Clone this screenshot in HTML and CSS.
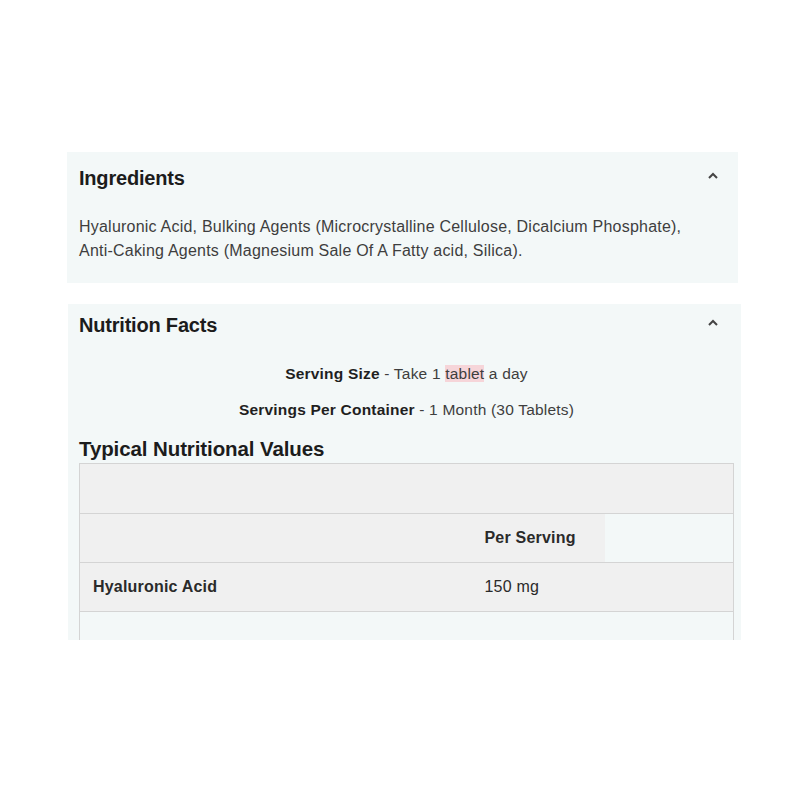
FILE: index.html
```html
<!DOCTYPE html>
<html>
<head>
<meta charset="utf-8">
<link rel="stylesheet" href="styles.css">
</head>
<body>
<div class="page">
  <section class="panel panel-ingredients">
    <div class="panel-head">
      <h2>Ingredients</h2>
      <svg class="chev" width="12" height="8" viewBox="0 0 12 8"><path d="M2 6 L6 2 L10 6" fill="none" stroke="#444" stroke-width="2"/></svg>
    </div>
    <p class="ing-text">Hyaluronic Acid, Bulking Agents (Microcrystalline Cellulose, Dicalcium Phosphate), Anti-Caking Agents (Magnesium Sale Of A Fatty acid, Silica).</p>
  </section>
  <section class="panel panel-nutrition">
    <div class="panel-head">
      <h2>Nutrition Facts</h2>
      <svg class="chev" width="12" height="8" viewBox="0 0 12 8"><path d="M2 6 L6 2 L10 6" fill="none" stroke="#444" stroke-width="2"/></svg>
    </div>
    <p class="serving"><b>Serving Size</b> - Take 1 <span class="hl">tablet</span> a day</p>
    <p class="serving"><b>Servings Per Container</b> - 1 Month (30 Tablets)</p>
    <h3>Typical Nutritional Values</h3>
    <table class="nt">
      <tr class="r-empty"><td colspan="3"></td></tr>
      <tr class="r-head"><td class="c1"></td><td class="c2 grey">Per Serving</td><td class="c3"></td></tr>
      <tr class="r-val"><td class="c1">Hyaluronic Acid</td><td class="c2" colspan="2">150 mg</td></tr>
      <tr class="r-last"><td colspan="3"></td></tr>
    </table>
  </section>
</div>
</body>
</html>
```
FILE: styles.css
```css
* { box-sizing: border-box; }
html, body { margin: 0; padding: 0; background: #fff; }
body { font-family: "Liberation Sans", Arial, sans-serif; color: #222; }
.page { height: 640px; overflow: hidden; padding-top: 152px; display: flex; flex-direction: column; }
.panel { background: #f3f8f8; flex: none; }
.panel-ingredients { margin-left: 67px; width: 671px; height: 131px; padding: 12px 11px 0 12px; }
.panel-nutrition { margin-left: 68px; width: 673px; margin-top: 21px; padding: 7px 7px 0 11px; height: 400px; }
.panel-head { display: flex; justify-content: space-between; align-items: center; height: 28px; }
.panel-head h2 { margin: 0; font-size: 20px; font-weight: bold; color: #1c1c1c; letter-spacing: -0.2px; }
.chev { margin-bottom: 4px; }
.panel-ingredients .chev { margin-right: 8px; }
.panel-nutrition .chev { margin-right: 15px; }
.ing-text { margin: 23px 0 0; max-width: 625px; font-size: 16px; line-height: 24px; color: #3e3e3e; letter-spacing: 0.22px; }
.serving { margin: 0; text-align: center; font-size: 15.5px; line-height: 36px; color: #3e3e3e; letter-spacing: 0.2px; }
.panel-nutrition .panel-head + .serving { margin-top: 17px; }
.serving b { color: #1f1f1f; }
.hl { background: #f6d5d9; }
h3 { margin: 8px 0 0; font-size: 20.5px; font-weight: bold; color: #1c1c1c; line-height: 26px; letter-spacing: -0.1px; }
.nt { border-collapse: collapse; width: 655px; margin-top: 1px; font-size: 16px; letter-spacing: 0.2px; color: #2a2a2a; }
.nt td { border: 1px solid #d4d4d4; height: 49px; padding: 0 13px; }
.nt .r-empty td { height: 50px; }
.nt .r-empty td, .nt .r-val td { background: #f0f0f0; }
.nt .c1 { width: 392px; border-right: none; }
.nt .r-head td { border-left: none; border-right: none; }
.nt .r-head .c1 { border-left: 1px solid #d4d4d4; background: #f0f0f0; }
.nt .r-head .c3 { border-right: 1px solid #d4d4d4; background: #f3f8f8; }
.nt .c2 { width: 133px; }
.nt .grey { background: #f0f0f0; font-weight: bold; }
.nt .r-val .c1 { font-weight: bold; }
.nt .r-val .c2 { border-left: none; }
.nt .r-last td { background: #f3f8f8; }
```
